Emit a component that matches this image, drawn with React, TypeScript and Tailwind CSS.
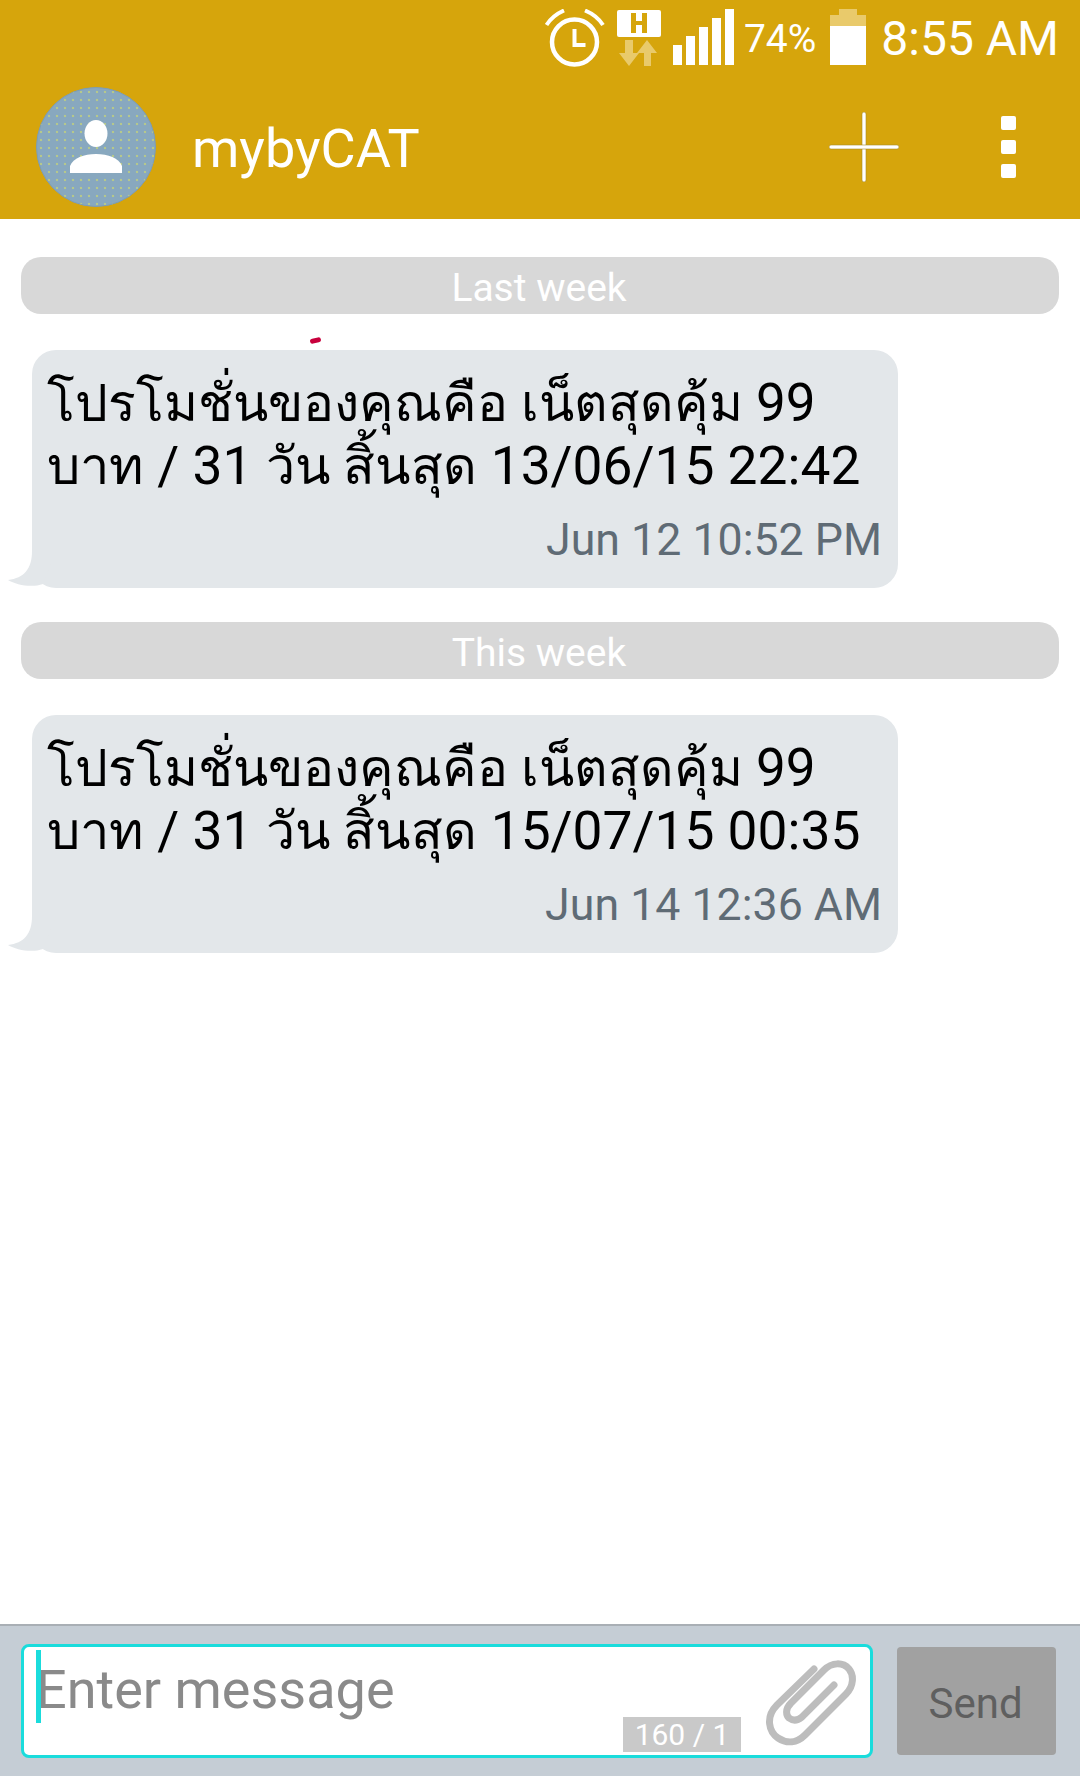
import React from 'react';

const AlarmIcon = () => (
  <svg width="60" height="58" viewBox="0 0 60 58" fill="none" stroke="#fff">
    <circle cx="29.500" cy="33" r="22.500" strokeWidth="4.500" />
    <path d="M29.500 20v16h11" strokeWidth="4" />
    <path d="M1.500 16C6 9 11 5 19 1.500M58 16C53.500 9 48.500 5 40 1.500" strokeWidth="4" />
  </svg>
);

const NetworkIcon = () => (
  <svg width="44" height="58" viewBox="0 0 44 58">
    <rect x="0" y="1" width="44" height="27" rx="2" fill="#fff" />
    <path d="M14 4h5v8h6V4h5v20h-5v-8h-6v8h-5z" fill="#d6a50c" />
    <path d="M8 31h8v13h6L12 57 2 44h6zM27 57V44h-7L30 31l10 13h-6v13z" fill="#e9ca6b" />
  </svg>
);

const SignalIcon = () => (
  <div className="flex items-end gap-[4px] h-[56px]">
    <div className="w-[9px] h-[20px] bg-white" />
    <div className="w-[9px] h-[29px] bg-white" />
    <div className="w-[9px] h-[38px] bg-white" />
    <div className="w-[9px] h-[47px] bg-white" />
    <div className="w-[9px] h-[56px] bg-white" />
  </div>
);

const BatteryIcon = () => (
  <svg width="36" height="56" viewBox="0 0 36 56">
    <path d="M9 0h18v6h9v11H0V6h9z" fill="#e9ca6b" />
    <rect x="0" y="17" width="36" height="39" fill="#fff" />
  </svg>
);

const PaperclipIcon = () => (
  <svg width="92" height="86" viewBox="0 0 92 86" fill="none" stroke="#bdbdbd" strokeWidth="7" strokeLinecap="round">
    <path d="M49 9 12 45C0 57 4 72 13 78c9 6 19 5 27-3l41-41c8-8 8-19 3-25C78 2 67 2 59 10L26 43c-6 6-5 12-2 15 4 3 8 3 13-1l32-32" />
  </svg>
);

const BubbleTail = () => (
  <svg className="absolute left-[-24px] bottom-0" width="48" height="40" viewBox="0 0 48 40">
    <path d="M24 3C24 21 16 30 0 32 8 37 24 40 35 36L48 3z" fill="#e3e7ea" />
  </svg>
);

const DateHeader = ({ label }: { label: string }) => (
  <div className="h-[57px] mx-[21px] pt-[6px] pr-[2px] rounded-[20px] bg-[#d8d8d8] flex items-center justify-center text-white text-[39px]">
    {label}
  </div>
);

const MessageBubble = ({ date, time, mark }: { date: string; time: string; mark?: boolean }) => (
  <div className="relative ml-[32px] w-[866px] h-[238px] rounded-[24px] bg-[#e3e7ea] pl-[15px] pr-[16px] pt-[22px]">
    {mark && <div className="absolute left-[278px] top-[-12px] w-[11px] h-[5px] rounded-full -rotate-12 bg-[#c8003c]" />}
    <BubbleTail />
    <div className="relative text-black text-[53px] leading-[62px] whitespace-nowrap">
      <span className="text-[51.7px]">โปรโมชั่นของคุณคือ เน็ตสุดคุ้ม</span> 99
    </div>
    <div className="relative text-black text-[53.3px] leading-[62px] whitespace-nowrap">
      <span className="text-[52.5px]">บาท</span> / 31 <span className="text-[52px]">วัน สิ้นสุด</span> {date}
    </div>
    <div className="text-right text-[#5f6b75] text-[44.7px] leading-[50px] mt-[17px]">{time}</div>
  </div>
);

export default function App() {
  return (
    <div className="w-[1080px] h-[1776px] flex flex-col bg-white font-['Roboto','Noto_Sans','DejaVu_Sans',sans-serif]">
      <header className="h-[219px] bg-[#d6a50c] shrink-0">
        <div className="h-[72px] flex justify-end items-start pt-[9px] pr-[21px] text-white">
          <AlarmIcon />
          <div className="ml-[12px]"><NetworkIcon /></div>
          <div className="ml-[12px]"><SignalIcon /></div>
          <span className="ml-[10px] mt-[5px] text-[39px] leading-[50px]">74%</span>
          <div className="ml-[14px]"><BatteryIcon /></div>
          <span className="ml-[15px] text-[48px] leading-[60px]">8:55 AM</span>
        </div>
        <div className="flex items-center h-[147px] pl-[36px] pr-[64px] pt-[3px]">
          <div className="w-[120px] h-[120px] rounded-full border border-[#7d9db5] bg-[#88a8bf] bg-[radial-gradient(#b5c88c_1.2px,transparent_1.6px)] bg-[length:8px_8px] flex items-center justify-center">
            <svg width="52" height="54" viewBox="0 0 52 54" fill="#fff">
              <ellipse cx="26" cy="13.500" rx="11.500" ry="13.500" />
              <path d="M0 53V46C3 38 14 34 26 34s23 4 26 12v7z" />
            </svg>
          </div>
          <span className="ml-[36px] mt-[3px] text-white text-[54px] leading-none">mybyCAT</span>
          <div className="ml-auto flex items-center">
            <svg width="70" height="70" viewBox="0 0 70 70" fill="#fff" stroke="#a68a2a" strokeWidth="0.6">
              <rect x="33" y="0" width="4" height="70" rx="2" />
              <rect x="0" y="33" width="70" height="4" rx="2" />
            </svg>
            <div className="ml-[102px] flex flex-col gap-[10px]">
              <div className="w-[15px] h-[14px] rounded-[2px] bg-white" />
              <div className="w-[15px] h-[14px] rounded-[2px] bg-white" />
              <div className="w-[15px] h-[14px] rounded-[2px] bg-white" />
            </div>
          </div>
        </div>
      </header>

      <main className="flex-1 pt-[38px] flex flex-col">
        <DateHeader label="Last week" />
        <div className="mt-[36px]">
          <MessageBubble mark date="13/06/15 22:42" time="Jun 12 10:52 PM" />
        </div>
        <div className="mt-[34px]">
          <DateHeader label="This week" />
        </div>
        <div className="mt-[36px]">
          <MessageBubble date="15/07/15 00:35" time="Jun 14 12:36 AM" />
        </div>
      </main>

      <footer className="h-[152px] shrink-0 bg-[#c5cdd5] border-t-2 border-[#a9afb5] flex items-start pl-[21px] pr-[24px] pt-[18px]">
        <div className="relative w-[853px] h-[114px] rounded-[8px] border-[3px] border-[#1adcdc] bg-white">
          <div className="absolute left-[12px] top-[3px] w-[5px] h-[73px] bg-[#1adcdc]" />
          <div className="pl-[12px] pt-[11px] text-[#8a8a8a] text-[54px] leading-[64px]">Enter message</div>
          <div className="absolute left-[599px] top-[70px] w-[118px] h-[35px] bg-[#c9c9c9] text-white text-[30px] leading-[35px] text-center">160 / 1</div>
          <div className="absolute left-[741px] top-[13px]"><PaperclipIcon /></div>
        </div>
        <button className="ml-[24px] mt-[3px] w-[159px] h-[108px] pt-[4px] pr-[2px] rounded-[4px] bg-[#a1a1a1] text-[#5f5f5f] text-[42px]">Send</button>
      </footer>
    </div>
  );
}
